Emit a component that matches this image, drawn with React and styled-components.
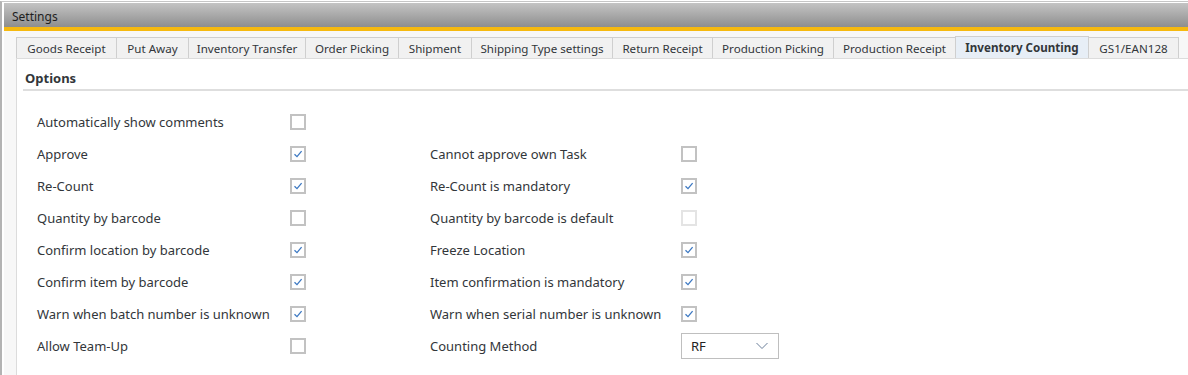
import React from "react";
import styled, { createGlobalStyle } from "styled-components";

const Global = createGlobalStyle`
  html, body { margin: 0; padding: 0; background: #fff; }
  body { font-family: "Noto Sans", "Open Sans", sans-serif; color: #32363a; }
  * { box-sizing: border-box; }
`;

const Frame = styled.div`
  width: 1188px;
  height: 375px;
  border-top: 1px solid #c6c6c6;
  border-left: 2px solid #b3b3b3;
  margin-top: 1px;
  padding: 1px 0 0 2px;
  display: flex;
  flex-direction: column;
  overflow: hidden;
`;

const TitleBar = styled.div`
  height: 24px;
  background: linear-gradient(#c4c4c4, #8e8e8e);
  display: flex;
  align-items: center;
  padding: 3px 0 0 8px;
  font-size: 12px;
  color: #1e1e1e;
  flex: none;
`;

const Accent = styled.div`
  height: 4px;
  background: #f6b90f;
  flex: none;
`;

const Body = styled.div`
  flex: 1;
  background: #f7f7f7;
  padding: 5px 0 0 12px;
  display: flex;
  flex-direction: column;
`;

const TabStrip = styled.div`
  display: flex;
  align-items: flex-end;
  height: 22px;
  flex: none;
`;

const Tab = styled.div`
  height: ${(p) => (p.$active ? "22px" : "21px")};
  width: ${(p) => p.$w}px;
  display: flex;
  align-items: center;
  justify-content: center;
  font-size: 11.6px;
  font-weight: ${(p) => (p.$active ? 700 : 400)};
  color: #32363a;
  background: ${(p) => (p.$active ? "#e7eef6" : "#f1f1f1")};
  border: 1px solid #cfcfcf;
  border-bottom: none;
  margin-left: -1px;
  white-space: nowrap;
  &:first-child { margin-left: 0; }
`;

const Panel = styled.div`
  flex: 1;
  background: #fff;
  border-left: 1px solid #dcdcdc;
  border-top: 1px solid #dcdcdc;
  padding: 7px 0 0 6px;
`;

const Header = styled.div`
  font-size: 13px;
  font-weight: 700;
  color: #32363a;
  padding: 4px 0 4px 2px;
  border-bottom: 2px solid #dedede;
  height: 25px;
  display: flex;
  align-items: center;
`;

const Grid = styled.div`
  display: grid;
  grid-template-columns: 253px 140px 251px auto;
  grid-auto-rows: 32px;
  align-items: center;
  padding: 15px 0 0 14px;
`;

const Label = styled.div`
  font-size: 13px;
  color: #32363a;
  white-space: nowrap;
`;

const Box = styled.div`
  width: 16px;
  height: 16px;
  border: 2px solid ${(p) => (p.$disabled ? "#e4e4e4" : "#c2c2c2")};
  background: #fff;
  display: flex;
  align-items: center;
  justify-content: center;
`;

const Select = styled.div`
  width: 98px;
  height: 26px;
  border: 1px solid #bfbfbf;
  display: flex;
  align-items: center;
  justify-content: space-between;
  padding: 0 10px 0 9px;
  font-size: 13px;
  color: #222;
`;

const Check = ({ checked, disabled }) => (
  <Box $disabled={disabled}>
    {checked && (
      <svg width="10" height="10" viewBox="0 0 10 10">
        <path d="M1.5 5.2 L4 7.6 L8.6 2.2" fill="none" stroke="#3c78c2" strokeWidth="1.3" />
      </svg>
    )}
  </Box>
);

const tabs = [
  ["Goods Receipt", 101],
  ["Put Away", 73],
  ["Inventory Transfer", 118],
  ["Order Picking", 94],
  ["Shipment", 74],
  ["Shipping Type settings", 142],
  ["Return Receipt", 101],
  ["Production Picking", 122],
  ["Production Receipt", 123],
  ["Inventory Counting", 134, true],
  ["GS1/EAN128", 91],
];

const rows = [
  ["Automatically show comments", false, null],
  ["Approve", true, ["Cannot approve own Task", false]],
  ["Re-Count", true, ["Re-Count is mandatory", true]],
  ["Quantity by barcode", false, ["Quantity by barcode is default", false, true]],
  ["Confirm location by barcode", true, ["Freeze Location", true]],
  ["Confirm item by barcode", true, ["Item confirmation is mandatory", true]],
  ["Warn when batch number is unknown", true, ["Warn when serial number is unknown", true]],
  ["Allow Team-Up", false, ["Counting Method", "select"]],
];

export default function App() {
  return (
    <>
      <Global />
      <Frame>
        <TitleBar>Settings</TitleBar>
        <Accent />
        <Body>
          <TabStrip>
            {tabs.map(([t, w, a]) => (
              <Tab key={t} $w={w} $active={a}>
                {t}
              </Tab>
            ))}
          </TabStrip>
          <Panel>
            <Header>Options</Header>
            <Grid>
              {rows.map(([l, c, r]) => (
                <React.Fragment key={l}>
                  <Label>{l}</Label>
                  <Check checked={c} />
                  {r ? <Label>{r[0]}</Label> : <span />}
                  {r ? (
                    r[1] === "select" ? (
                      <Select>
                        <span>RF</span>
                        <svg width="12" height="8" viewBox="0 0 12 8">
                          <path d="M0.5 1 L6 6.5 L11.5 1" fill="none" stroke="#6b7f99" strokeWidth="1" />
                        </svg>
                      </Select>
                    ) : (
                      <Check checked={r[1]} disabled={r[2]} />
                    )
                  ) : (
                    <span />
                  )}
                </React.Fragment>
              ))}
            </Grid>
          </Panel>
        </Body>
      </Frame>
    </>
  );
}
